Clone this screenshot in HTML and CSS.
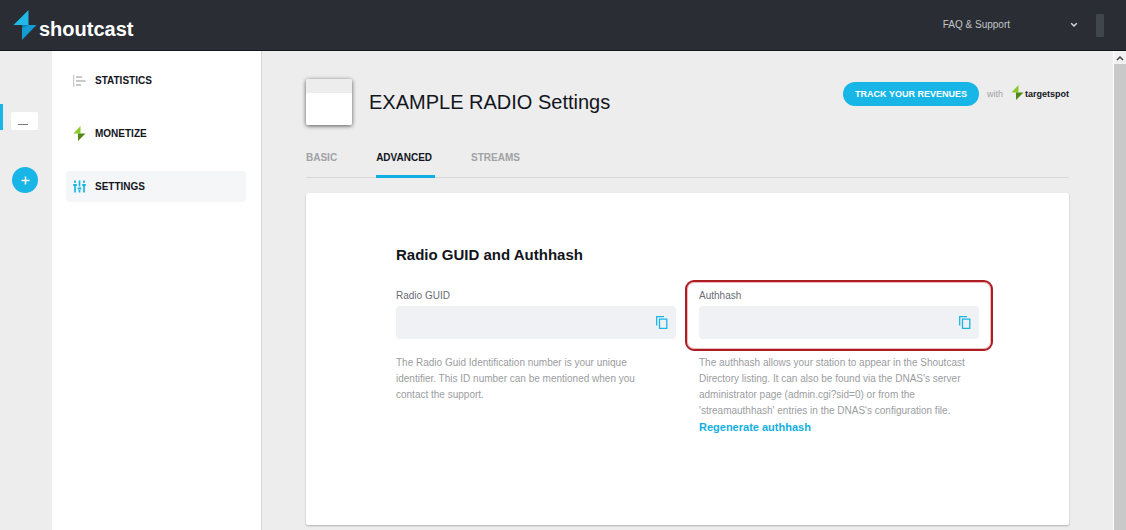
FILE: index.html
```html
<!DOCTYPE html>
<html lang="en">
<head>
<meta charset="utf-8">
<title>Shoutcast - Settings</title>
<link rel="stylesheet" href="styles.css">
</head>
<body>
<header class="topbar">
  <a class="brand" href="#">
    <svg class="brand-mark" viewBox="0 0 24 32" aria-hidden="true"><path fill="#20b9e8" d="M15.500 1V16H.5z"/><path fill="#139bd2" d="M9 16H23.500L9 31z"/><path fill="#0c7fae" d="M9 16h6.500L9 19z"/></svg>
    <span>shoutcast</span>
  </a>
  <button class="support" type="button">
    <span>FAQ &amp; Support</span>
    <svg width="8" height="6" viewBox="0 0 8 6" aria-hidden="true"><path d="M1.200 1.200 4 4l2.800-2.800" fill="none" stroke="#d5d7da" stroke-width="1.500"/></svg>
  </button>
  <span class="account"></span>
</header>
<div class="shell">
  <aside class="rail">
    <div class="station"><a class="station-thumb" href="#" aria-label="Example Radio"><span class="thumb-mark"></span></a></div>
    <button class="add" type="button" aria-label="Add station"><svg width="9" height="9" viewBox="0 0 9 9"><path d="M4.500 .5v8M.5 4.500h8" stroke="#fff" stroke-width="1.500"/></svg></button>
  </aside>
  <nav class="menu">
    <a href="#"><svg viewBox="0 0 13 15" aria-hidden="true"><path fill="#c9c9c9" d="M0 2h1.200v12H0zM3 3h6v2H3zM3 7h9.500v2H3zM3 11h5v2H3z"/></svg>STATISTICS</a>
    <a href="#"><svg viewBox="0 0 13 15" aria-hidden="true"><path fill="#8ac926" d="M7.500 0v7.500H.5z"/><path fill="#4f8a14" d="M5 7.500h7.500L5 15z"/></svg>MONETIZE</a>
    <a class="current" href="#"><svg viewBox="0 0 13 15" aria-hidden="true"><path d="M2 1.500v2.500M2 7v6.500M6.500 1.500v6M6.500 11v2.500M11 1.500v2.500M11 7v6.500" stroke="#18b6e6" stroke-width="1.700"/><path fill="#18b6e6" d="M.2 5h3.600v2H.2zM4.700 8.500h3.600v2H4.700zM9.200 5h3.600v2H9.200z"/></svg>SETTINGS</a>
  </nav>
  <main class="content">
    <div class="page-head">
      <span class="cover"></span>
      <h1>EXAMPLE RADIO Settings</h1>
      <div class="promo">
        <button class="track" type="button">TRACK YOUR REVENUES</button>
        <span class="with">with</span>
        <a class="target" href="#"><svg viewBox="0 0 13 15" aria-hidden="true"><path fill="#8ac926" d="M7.500 0v7.500H.5z"/><path fill="#4f8a14" d="M5 7.500h7.500L5 15z"/></svg>targetspot</a>
      </div>
    </div>
    <nav class="tabs">
      <a href="#">BASIC</a>
      <a class="active" href="#">ADVANCED</a>
      <a href="#">STREAMS</a>
    </nav>
    <section class="card">
      <h2>Radio GUID and Authhash</h2>
      <div class="fields">
        <div class="field">
          <label for="guid">Radio GUID</label>
          <div class="box">
            <input id="guid" type="text" readonly>
            <button type="button" aria-label="Copy radio GUID"><svg width="12" height="13" viewBox="0 0 12 13"><path d="M.7 9.500V.7H8M3.500 3.200h7.300v9.100H3.500z" fill="none" stroke="#18b6e6" stroke-width="1.300"/></svg></button>
          </div>
          <p>The Radio Guid Identification number is your unique identifier. This ID number can be mentioned when you contact the support.</p>
        </div>
        <div class="field">
          <label for="hash">Authhash</label>
          <div class="box">
            <input id="hash" type="text" readonly>
            <button type="button" aria-label="Copy authhash"><svg width="12" height="13" viewBox="0 0 12 13"><path d="M.7 9.500V.7H8M3.500 3.200h7.300v9.100H3.500z" fill="none" stroke="#18b6e6" stroke-width="1.300"/></svg></button>
            <span class="outline"></span>
          </div>
          <p>The authhash allows your station to appear in the Shoutcast Directory listing. It can also be found via the DNAS's server administrator page (admin.cgi?sid=0) or from the 'streamauthhash' entries in the DNAS's configuration file.</p>
          <a class="regen" href="#">Regenerate authhash</a>
        </div>
      </div>
    </section>
  </main>
  <div class="scroll" aria-hidden="true">
    <svg viewBox="0 0 12 13"><path d="M3 9l3-3 3 3" fill="none" stroke="#444" stroke-width="1.500"/></svg>
    <span class="scroll-thumb"></span>
  </div>
</div>
</body>
</html>
```
FILE: styles.css
```css
* { box-sizing: border-box; }
body {
  margin: 0;
  height: 100vh;
  display: flex;
  flex-direction: column;
  overflow: hidden;
  background: #ededed;
  color: #12151c;
  font: 10px/16px "Liberation Sans", Arial, sans-serif;
}
a { color: inherit; text-decoration: none; }
button { padding: 0; border: 0; background: none; font: inherit; color: inherit; cursor: pointer; }
svg { display: block; flex: none; }
h1, h2, p { margin: 0; }

.topbar {
  flex: none;
  display: flex;
  align-items: center;
  height: 51px;
  padding: 0 22px 0 13px;
  background: #2a2d34;
  border-bottom: 1px solid #14161f;
}
.brand {
  display: flex;
  align-items: center;
  gap: 2px;
  margin-right: auto;
  color: #fff;
  font-size: 20px;
  font-weight: bold;
}
.brand span { padding-top: 7px; }
.brand-mark { width: 24px; height: 32px; }
.support {
  display: flex;
  align-items: center;
  gap: 60px;
  margin-right: 18px;
  color: #c3c5c9;
}
.account { width: 8px; height: 23px; border-radius: 1px; background: #40464e; }

.shell { flex: 1; min-height: 0; display: flex; }
.rail {
  flex: none;
  width: 52px;
  padding-top: 53px;
  display: flex;
  flex-direction: column;
  gap: 37px;
}
.station { display: flex; align-items: flex-end; height: 26px; border-left: 3px solid #18b6e6; }
.station-thumb {
  display: flex;
  align-items: flex-end;
  justify-content: center;
  width: 27px;
  height: 18px;
  margin-left: 8px;
  padding: 0 3px 5px 0;
  border-radius: 2px;
  background: #fff;
}
.thumb-mark { width: 10px; height: 1px; background: #777; }
.add {
  display: flex;
  align-items: center;
  justify-content: center;
  width: 26px;
  height: 26px;
  margin-left: 12px;
  border-radius: 50%;
  background: #18b6e6;
}

.menu {
  flex: none;
  width: 210px;
  display: flex;
  flex-direction: column;
  gap: 22px;
  padding: 14px 15px 0 14px;
  background: #fff;
  border-right: 1px solid #d6d6d6;
}
.menu a {
  display: flex;
  align-items: center;
  gap: 9px;
  height: 31px;
  padding-left: 7px;
  border-radius: 4px;
  font-weight: bold;
}
.menu svg { width: 13px; height: 15px; }
.menu .current { background: #f5f6f8; }

.content {
  flex: 1;
  min-width: 0;
  display: flex;
  flex-direction: column;
  padding: 28px 44px 5px;
}
.page-head { display: flex; align-items: center; }
.cover {
  width: 46px;
  height: 46px;
  border-radius: 2px;
  background: linear-gradient(#ededed 14px, #fff 14px);
  box-shadow: 0 1px 4px rgba(0, 0, 0, .65);
}
h1 { margin-left: 17px; font-size: 20px; font-weight: normal; line-height: 24px; }
.promo { display: flex; align-items: center; gap: 8px; margin: 0 0 16px auto; font-size: 9px; }
.track {
  height: 24px;
  padding: 0 12px;
  border-radius: 12px;
  background: #18b6e6;
  color: #fff;
  font-weight: bold;
}
.with { color: #a0a2a6; }
.target { display: flex; align-items: center; gap: 1px; font-weight: bold; }
.target svg { width: 13px; height: 15px; margin-bottom: 4px; }

.tabs {
  flex: none;
  display: flex;
  gap: 36px;
  margin-top: 25px;
  border-bottom: 1px solid #d8d8d8;
  color: #a0a2a6;
  font-weight: bold;
}
.tabs a { height: 28px; margin-bottom: -1px; padding-right: 3px; border-bottom: 3px solid transparent; }
.tabs .active { color: #12151c; border-color: #10afe2; }

.card {
  flex: 1;
  margin-top: 15px;
  padding: 52px 90px 0;
  border-radius: 2px;
  background: #fff;
  box-shadow: 0 1px 2px rgba(0, 0, 0, .25);
}
h2 { font-size: 15px; line-height: 20px; }
.fields { display: grid; grid-template-columns: 1fr 1fr; gap: 23px; margin-top: 23px; }
label { display: block; color: #696d76; }
.box {
  position: relative;
  display: flex;
  align-items: center;
  height: 33px;
  margin-top: 2px;
  padding-right: 8px;
  border-radius: 4px;
  background: #f0f1f5;
}
.box input { flex: 1; min-width: 0; height: 100%; border: 0; padding: 0 10px; background: none; outline: 0; }
.outline {
  position: absolute;
  inset: -26px -14px -12px;
  border: 2px solid #ae1c24;
  border-radius: 9px;
  box-shadow: inset 0 0 0 1px rgba(174, 28, 36, .3);
  pointer-events: none;
}
.field p { margin-top: 16px; padding-right: 8px; color: #9b9da1; }
.regen { color: #10afe2; font-size: 11px; font-weight: bold; }

.scroll { flex: none; width: 13px; display: flex; flex-direction: column; border-left: 1px solid #fff; background: #f1f1f1; }
.scroll svg { width: 12px; height: 13px; }
.scroll-thumb { flex: 1; background: #c9c9c9; }
```
